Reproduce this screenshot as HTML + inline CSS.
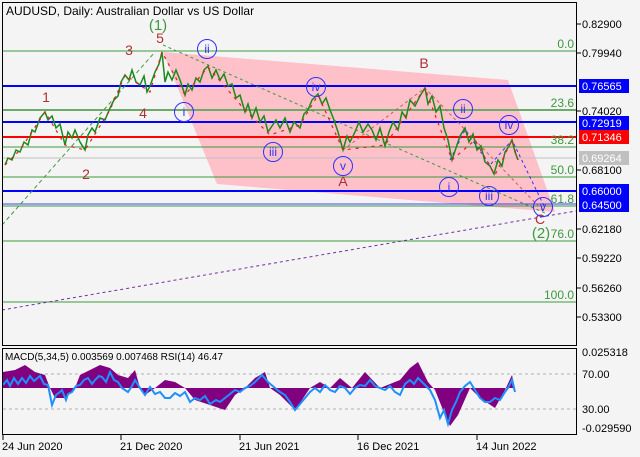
<!DOCTYPE html>
<html><head><meta charset="utf-8"><style>
body{margin:0;background:#f4f4f4;width:640px;height:457px;overflow:hidden}
svg{display:block;font-family:"Liberation Sans",sans-serif}
</style></head><body>
<svg width="640" height="457" viewBox="0 0 640 457">
<rect width="640" height="457" fill="#f4f4f4"/>
<polygon points="163,52 508,80 555,212 217,184" fill="#ffb6c1" opacity="0.85"/>
<g stroke-width="1">
<line x1="2" y1="51" x2="576" y2="51" stroke="#3c9a3c"/>
<line x1="2" y1="110" x2="576" y2="110" stroke="#6aaa6a" stroke-width="2"/>
<line x1="2" y1="147" x2="576" y2="147" stroke="#3c9a3c"/>
<line x1="2" y1="158" x2="576" y2="158" stroke="#c0c0c0"/>
<line x1="2" y1="177" x2="576" y2="177" stroke="#3c9a3c"/>
<line x1="2" y1="206" x2="576" y2="206" stroke="#3c9a3c"/>
<line x1="2" y1="241" x2="576" y2="241" stroke="#3c9a3c"/>
<line x1="2" y1="302" x2="576" y2="302" stroke="#3c9a3c"/>
<line x1="2" y1="86" x2="576" y2="86" stroke="#0000ff" stroke-width="2"/>
<line x1="2" y1="122" x2="576" y2="122" stroke="#0000ff" stroke-width="2"/>
<line x1="2" y1="137" x2="576" y2="137" stroke="#ff0000" stroke-width="2"/>
<line x1="2" y1="191" x2="576" y2="191" stroke="#0000ff" stroke-width="2"/>
<line x1="2" y1="204" x2="576" y2="204" stroke="#4040ff"/>
</g>
<line x1="2" y1="225" x2="155" y2="52" stroke="#3c9a3c" stroke-dasharray="4,3"/>
<line x1="2" y1="310" x2="576" y2="211" stroke="#7030a0" stroke-dasharray="3,3"/>
<line x1="163" y1="45" x2="545" y2="213" stroke="#3c9a3c" stroke-dasharray="3,3"/>
<polyline points="343,150 425,88 545,213" fill="none" stroke="#c06060" stroke-dasharray="3,3"/>
<polyline points="450,160 465,130 490,165 512,140 545,208" fill="none" stroke="#3030ff" stroke-dasharray="3,3"/>
<polyline fill="none" stroke="#1a8a1a" stroke-width="1.5" points="5,165 8,158 12,160 16,150 20,152 24,142 28,145 32,130 35,132 40,118 45,112 48,120 52,116 56,128 60,124 65,145 68,132 72,138 75,130 80,142 85,150 88,135 92,128 95,132 100,118 105,120 110,108 114,100 118,96 121,82 125,75 129,80 132,70 136,82 140,85 144,76 147,92 150,86 155,72 159,64 162,52 165,82 168,72 172,80 176,70 180,80 185,95 188,84 192,90 196,78 200,82 204,70 208,66 212,78 216,70 220,80 224,74 228,86 232,84 236,98 240,95 245,112 248,104 252,118 256,108 260,122 264,116 268,132 272,126 276,120 280,128 285,118 290,132 294,122 300,128 304,114 308,110 312,100 318,94 322,104 326,98 330,110 334,120 338,132 343,150 347,136 350,142 355,132 359,122 363,132 368,124 372,130 376,140 380,128 385,146 389,132 393,122 398,130 402,112 406,118 410,100 415,106 420,96 425,88 428,104 432,96 436,112 440,106 444,128 448,140 452,160 456,148 460,136 465,128 469,142 473,134 477,150 481,146 485,162 490,166 494,174 498,160 502,166 505,152 509,146 512,140 515,152 518,160"/>
<polyline fill="none" stroke="#e02020" stroke-width="1.2" stroke-dasharray="3,5" points="5,165 20,150 45,112 65,145 85,150 110,110 125,75 150,92 162,52 185,95 208,67 245,110 270,135 300,125 318,95 343,150 385,145 425,88 452,160 475,140 495,175 512,140 518,160"/>
<g font-size="14" fill="#b03030" text-anchor="middle">
<text x="46" y="102">1</text><text x="86" y="179">2</text><text x="129" y="55">3</text><text x="143" y="118">4</text><text x="160" y="43">5</text>
<text x="424" y="68">B</text><text x="343" y="186">A</text><text x="540" y="224">C</text>
</g>
<text x="158" y="30" font-size="15" fill="#3c9a3c" text-anchor="middle">(1)</text>
<text x="541" y="238" font-size="15" fill="#3c9a3c" text-anchor="middle">(2)</text>
<g fill="none" stroke="#3030ff"><circle cx="207" cy="49" r="9.5"/><circle cx="184" cy="112" r="9.5"/><circle cx="273" cy="152" r="9.5"/><circle cx="316" cy="87" r="9.5"/><circle cx="343" cy="166" r="9.5"/><circle cx="463" cy="109" r="9.5"/><circle cx="449" cy="187" r="9.5"/><circle cx="489" cy="196" r="9.5"/><circle cx="509" cy="125" r="9.5"/><circle cx="543" cy="207" r="9.5"/></g>
<g font-size="12" fill="#3030ff" text-anchor="middle"><text x="207" y="53">ii</text><text x="184" y="116">i</text><text x="273" y="156">iii</text><text x="316" y="91">iv</text><text x="343" y="170">v</text><text x="463" y="113">ii</text><text x="449" y="191">i</text><text x="489" y="200">iii</text><text x="509" y="129">iv</text><text x="543" y="211">v</text></g>
<g font-size="12" fill="#3c9a3c" text-anchor="end"><text x="574" y="48">0.0</text><text x="574" y="107">23.6</text><text x="574" y="144">38.2</text><text x="574" y="174">50.0</text><text x="574" y="203">61.8</text><text x="574" y="238">76.0</text><text x="574" y="299">100.0</text></g>
<text x="6" y="15" font-size="12" fill="#000">AUDUSD, Daily:  Australian Dollar vs US Dollar</text>
<rect x="2.5" y="2.5" width="574" height="343" fill="none" stroke="#000"/>
<g font-size="11" fill="#000"><text x="582" y="28">0.82900</text><text x="582" y="57">0.79940</text><text x="582" y="115">0.74020</text><text x="582" y="174">0.68100</text><text x="582" y="233">0.62180</text><text x="582" y="262">0.59220</text><text x="582" y="292">0.56260</text><text x="582" y="321">0.53300</text></g>
<g stroke="#000"><line x1="577" y1="24" x2="581" y2="24"/><line x1="577" y1="53" x2="581" y2="53"/><line x1="577" y1="111" x2="581" y2="111"/><line x1="577" y1="170" x2="581" y2="170"/><line x1="577" y1="229" x2="581" y2="229"/><line x1="577" y1="258" x2="581" y2="258"/><line x1="577" y1="288" x2="581" y2="288"/><line x1="577" y1="317" x2="581" y2="317"/></g>
<rect x="579" y="79" width="50" height="14" fill="#0000ff"/><text x="582" y="90" font-size="11" fill="#fff">0.76565</text>
<rect x="579" y="116" width="50" height="14" fill="#0000ff"/><text x="582" y="127" font-size="11" fill="#fff">0.72919</text>
<rect x="579" y="130" width="50" height="14" fill="#ff0000"/><text x="582" y="141" font-size="11" fill="#fff">0.71346</text>
<rect x="579" y="151" width="50" height="14" fill="#c0c0c0"/><text x="582" y="162" font-size="11" fill="#fff">0.69264</text>
<rect x="579" y="184" width="50" height="14" fill="#0000ff"/><text x="582" y="195" font-size="11" fill="#fff">0.66000</text>
<rect x="579" y="198" width="50" height="14" fill="#0000ff"/><text x="582" y="209" font-size="11" fill="#fff">0.64500</text>
<line x1="3" y1="374" x2="576" y2="374" stroke="#b0b0b0" stroke-dasharray="3,3"/>
<line x1="3" y1="409" x2="576" y2="409" stroke="#b0b0b0" stroke-dasharray="3,3"/>
<polygon fill="#800080" points="3,388 3,372 15,370 25,365 35,372 45,375 50,388 55,398 65,398 72,392 75,388 80,375 90,370 100,365 110,368 118,375 128,378 135,370 140,388 145,395 155,388 165,380 175,382 185,388 195,400 210,405 225,410 235,395 245,388 255,378 265,372 270,388 280,395 290,405 295,410 302,400 310,388 320,382 330,388 340,378 352,388 365,372 380,388 400,380 410,368 418,362 428,382 435,390 445,415 450,426 458,415 470,388 480,398 495,408 505,390 512,375 515,388"/>
<polyline fill="none" stroke="#1e90ff" stroke-width="2" points="3,385 7,380 10,386 14,378 18,384 22,378 26,383 30,376 34,381 40,376 44,384 48,385 52,405 56,395 60,392 62,390 66,400 68,394 72,392 76,386 80,385 84,380 88,378 92,384 95,380 99,376 102,377 106,382 110,372 114,380 118,382 122,388 128,392 132,386 135,380 140,388 145,395 150,387 155,394 160,392 165,398 170,398 175,393 180,396 185,392 190,402 195,398 200,400 205,396 210,404 216,400 220,402 225,398 230,394 235,390 240,392 245,388 250,386 255,382 262,375 268,382 275,388 280,392 285,395 290,402 295,410 300,404 305,398 310,392 315,388 320,392 325,385 330,390 335,392 340,386 345,388 350,394 355,388 360,385 365,386 370,380 375,386 380,388 385,390 390,386 395,392 400,395 405,384 410,380 414,384 418,378 425,385 430,390 435,400 440,418 444,410 448,424 452,410 456,402 460,392 465,386 470,382 475,390 480,398 485,402 490,402 495,398 500,400 505,392 508,388 512,380 515,392"/>
<rect x="2.5" y="348.5" width="574" height="86" fill="none" stroke="#000"/>
<text x="5" y="360" font-size="10" fill="#000">MACD(5,34,5) 0.003569 0.007468 RSI(14) 46.47</text>
<g font-size="11" fill="#000"><text x="582" y="356">0.025318</text><text x="582" y="378">70.00</text><text x="582" y="413">30.00</text><text x="582" y="432">-0.029590</text></g>
<g stroke="#000"><line x1="3" y1="435" x2="3" y2="440"/><line x1="121" y1="435" x2="121" y2="440"/><line x1="240" y1="435" x2="240" y2="440"/><line x1="358" y1="435" x2="358" y2="440"/><line x1="477" y1="435" x2="477" y2="440"/></g>
<g font-size="11" fill="#000"><text x="2" y="450">24 Jun 2020</text><text x="120" y="450">21 Dec 2020</text><text x="239" y="450">21 Jun 2021</text><text x="357" y="450">16 Dec 2021</text><text x="476" y="450">14 Jun 2022</text></g>
</svg>
</body></html>
